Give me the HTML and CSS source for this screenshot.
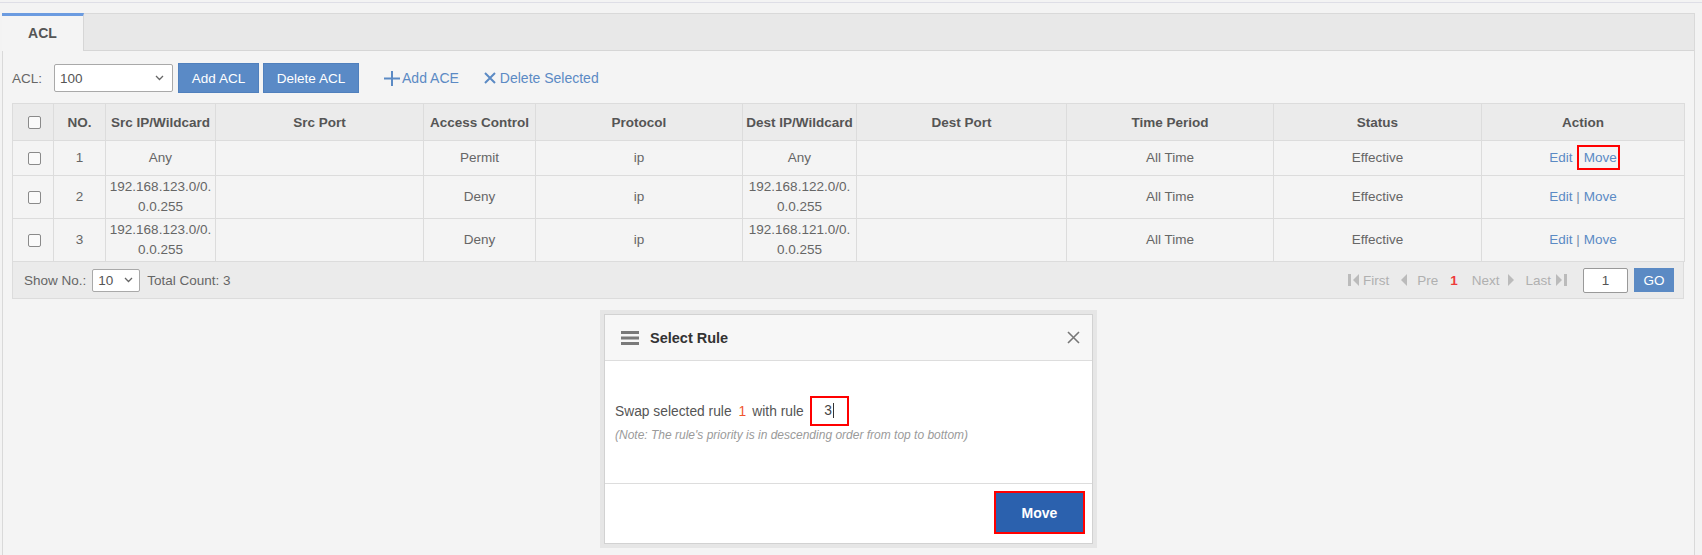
FILE: index.html
```html
<!DOCTYPE html>
<html lang="en">
<head>
  <meta charset="UTF-8" />
  <title>ACL</title>
  <link rel="stylesheet" href="styles.css">
</head>
<body>
  <div class="topline"></div>
  <div class="panel">
    <div class="tabs">
      <div class="tab active">ACL</div>
    </div>
    <div class="panel-body">
      <div class="toolbar">
        <span class="lbl">ACL:</span>
        <div class="select select-acl">
          <span>100</span>
          <svg width="9" height="6" viewBox="0 0 9 6"><path d="M1 1l3.5 3.5L8 1" fill="none" stroke="#666" stroke-width="1.3"/></svg>
        </div>
        <button class="btn btn-add">Add ACL</button>
        <button class="btn btn-del">Delete ACL</button>
        <a class="tool-link"><svg width="16" height="15" viewBox="0 0 16 15"><path d="M0 7.5H16M8 0V15" stroke="#5b8ac4" stroke-width="2"/></svg>Add ACE</a>
        <a class="tool-link tool-del"><svg width="12" height="12" viewBox="0 0 12 12"><path d="M1 1L11 11M11 1L1 11" stroke="#5b8ac4" stroke-width="2"/></svg>Delete Selected</a>
      </div>

      <table class="grid">
        <colgroup>
          <col style="width:41px"><col style="width:52px"><col style="width:110px"><col style="width:208px">
          <col style="width:112px"><col style="width:207px"><col style="width:114px"><col style="width:210px">
          <col style="width:207px"><col style="width:208px"><col style="width:203px">
        </colgroup>
        <thead>
          <tr>
            <th><span class="chk"></span></th>
            <th>NO.</th>
            <th>Src IP/Wildcard</th>
            <th>Src Port</th>
            <th>Access Control</th>
            <th>Protocol</th>
            <th>Dest IP/Wildcard</th>
            <th>Dest Port</th>
            <th>Time Period</th>
            <th>Status</th>
            <th>Action</th>
          </tr>
        </thead>
        <tbody>
          <tr class="one">
            <td><span class="chk"></span></td>
            <td>1</td>
            <td>Any</td>
            <td></td>
            <td>Permit</td>
            <td>ip</td>
            <td>Any</td>
            <td></td>
            <td>All Time</td>
            <td>Effective</td>
            <td><a class="act">Edit</a> <span class="sep">|</span> <a class="act mark">Move</a></td>
          </tr>
          <tr>
            <td><span class="chk"></span></td>
            <td>2</td>
            <td>192.168.123.0/0.0.0.255</td>
            <td></td>
            <td>Deny</td>
            <td>ip</td>
            <td>192.168.122.0/0.0.0.255</td>
            <td></td>
            <td>All Time</td>
            <td>Effective</td>
            <td><a class="act">Edit</a> <span class="sep">|</span> <a class="act">Move</a></td>
          </tr>
          <tr>
            <td><span class="chk"></span></td>
            <td>3</td>
            <td>192.168.123.0/0.0.0.255</td>
            <td></td>
            <td>Deny</td>
            <td>ip</td>
            <td>192.168.121.0/0.0.0.255</td>
            <td></td>
            <td>All Time</td>
            <td>Effective</td>
            <td><a class="act">Edit</a> <span class="sep">|</span> <a class="act">Move</a></td>
          </tr>
        </tbody>
      </table>

      <div class="pager">
        <span>Show No.:</span>
        <div class="select select-size">
          <span>10</span>
          <svg width="9" height="6" viewBox="0 0 9 6"><path d="M1 1l3.5 3.5L8 1" fill="none" stroke="#666" stroke-width="1.3"/></svg>
        </div>
        <span>Total Count: 3</span>

        <div class="pages">
          <span class="pg pg-first"><svg width="11" height="12" viewBox="0 0 11 12"><rect x="0" y="0" width="3" height="12" fill="#bbb"/><path d="M11 0V12L5 6Z" fill="#bbb"/></svg>First</span>
          <span class="pg pg-pre"><svg width="6" height="12" viewBox="0 0 6 12"><path d="M6 0V12L0 6Z" fill="#bbb"/></svg>Pre</span>
          <span class="cur">1</span>
          <span class="pg pg-next">Next<svg width="6" height="12" viewBox="0 0 6 12"><path d="M0 0V12L6 6Z" fill="#bbb"/></svg></span>
          <span class="pg pg-last">Last<svg width="11" height="12" viewBox="0 0 11 12"><path d="M0 0V12L6 6Z" fill="#bbb"/><rect x="8" y="0" width="3" height="12" fill="#bbb"/></svg></span>
          <div class="page-input">1</div>
          <button class="go">GO</button>
        </div>
      </div>

      <div class="dialog">
        <div class="dlg">
          <div class="dlg-head">
            <svg width="18" height="14" viewBox="0 0 18 14"><rect y="0" width="18" height="3" fill="#7a7a7a"/><rect y="5.5" width="18" height="3" fill="#7a7a7a"/><rect y="11" width="18" height="3" fill="#7a7a7a"/></svg>
            <span class="dlg-title">Select Rule</span>
            <svg class="close" width="13" height="13" viewBox="0 0 13 13"><path d="M1 1L12 12M12 1L1 12" stroke="#777" stroke-width="1.6"/></svg>
          </div>
          <div class="dlg-body">
            <div class="swap">
              <span>Swap selected rule</span>
              <span class="rule-no">1</span>
              <span>with rule</span>
              <div class="rule-input"><span class="caret">3</span></div>
            </div>
            <div class="note">(Note: The rule's priority is in descending order from top to bottom)</div>
          </div>
          <div class="dlg-foot">
            <button class="btn-move">Move</button>
          </div>
        </div>
      </div>
    </div>
  </div>
</body>
</html>
```

FILE: styles.css
```css
html, body {
  overflow: hidden;
}

body {
  margin: 0;
  background: #f3f3f3;
  font-family: "Liberation Sans", Arial, sans-serif;
  font-size: 13.5px;
  color: #666;
}

.topline {
  height: 2px;
  border-bottom: 1px solid #dedee6;
}

.panel {
  margin: 10px 7px 0 2px;
  border: 1px solid #d9d9d9;
  background: #f4f4f4;
  height: 600px;
}

/* tab strip */
.tabs {
  display: flex;
  height: 36px;
  background: #e8e8e8;
  border-bottom: 1px solid #d6d6d6;
}

.tab {
  box-sizing: border-box;
  width: 82px;
  height: 38px;
  margin: -1px 0 0 -1px;
  border-top: 3px solid #6b9be0;
  border-right: 1px solid #d6d6d6;
  background: #f4f4f4;
  font-size: 14px;
  font-weight: bold;
  color: #555;
  text-align: center;
  line-height: 34px;
}

.panel-body {
  padding: 12px 9px 0;
}

/* toolbar */
.toolbar {
  display: flex;
  align-items: center;
  height: 30px;
}

.lbl {
  margin-right: 12px;
}

.select {
  box-sizing: border-box;
  display: flex;
  align-items: center;
  justify-content: space-between;
  background: #fff;
  border: 1px solid #a9a9a9;
  border-radius: 2px;
  color: #555;
}

.select-acl {
  width: 119px;
  height: 28px;
  padding: 0 8px 0 5px;
}

.btn {
  box-sizing: border-box;
  height: 30px;
  padding: 0;
  background: #5a8ac6;
  border: 1px solid #5080bd;
  color: #fff;
  font: inherit;
}

.btn-add {
  width: 81px;
  margin-left: 5px;
}

.btn-del {
  width: 96px;
  margin-left: 4px;
}

.tool-link {
  display: flex;
  align-items: center;
  margin-left: 25px;
  font-size: 14px;
  color: #5b8ac4;
}

.tool-link svg {
  margin-right: 2px;
}

.tool-del svg {
  margin-right: 4px;
}

/* table */
.grid {
  margin-top: 10px;
  width: 1672px;
  table-layout: fixed;
  border-collapse: collapse;
  border: 1px solid #dcdcdc;
}

.grid th,
.grid td {
  border: 1px solid #dcdcdc;
  text-align: center;
}

.grid th {
  height: 36px;
  padding: 0 2px;
  background: #ebebeb;
  font-weight: bold;
  color: #555;
}

.grid td {
  padding: 1px 2px;
  line-height: 20px;
  word-break: break-all;
}

.grid tr.one td {
  height: 32px;
}

.chk {
  display: inline-block;
  vertical-align: middle;
  box-sizing: border-box;
  width: 13px;
  height: 13px;
  margin-left: 2px;
  border: 1px solid #8a8a8a;
  border-radius: 2px;
  background: #fafafa;
}

.act {
  color: #5b8ac4;
}

.sep {
  color: #7a8ca8;
}

.mark {
  position: relative;
  display: inline-block;
}

.mark::after {
  content: "";
  position: absolute;
  left: -7px;
  right: -3px;
  top: -3px;
  bottom: -2px;
  border: 2px solid #f00;
}

/* pager */
.pager {
  box-sizing: border-box;
  width: 1672px;
  height: 37px;
  display: flex;
  align-items: center;
  padding: 0 9px 0 11px;
  background: #ebebeb;
  border: 1px solid #dcdcdc;
  border-top: 0;
}

.select-size {
  width: 48px;
  height: 23px;
  margin: 0 7px 0 6px;
  padding: 0 6px 0 5px;
}

.pages {
  margin-left: auto;
  display: flex;
  align-items: center;
  color: #b0b0b0;
}

.pg {
  display: flex;
  align-items: center;
}

.pg-first svg { margin-right: 4px; }
.pg-pre { margin-left: 12px; }
.pg-pre svg { margin-right: 10px; }

.cur {
  margin-left: 12px;
  color: #ee3b3b;
  font-weight: bold;
}

.pg-next { margin-left: 14px; }
.pg-next svg { margin-left: 9px; }
.pg-last { margin-left: 11px; }
.pg-last svg { margin-left: 5px; }

.page-input {
  box-sizing: border-box;
  width: 45px;
  height: 25px;
  margin-left: 16px;
  border: 1px solid #999;
  border-radius: 2px;
  background: #fff;
  color: #555;
  text-align: center;
  line-height: 23px;
}

.go {
  width: 40px;
  height: 24px;
  margin-left: 6px;
  border: none;
  background: #5b8ac4;
  color: #fff;
  font: inherit;
}

/* dialog */
.dialog {
  box-sizing: border-box;
  width: 497px;
  margin: 11px auto 0;
  padding: 4px;
  background: #e6e6e6;
}

.dlg {
  border: 1px solid #d2d2d2;
  background: #fff;
}

.dlg-head {
  height: 45px;
  display: flex;
  align-items: center;
  padding: 0 12px 0 16px;
  background: #f7f7f7;
  border-bottom: 1px solid #dddddd;
}

.dlg-title {
  margin-left: 11px;
  font-size: 14.5px;
  font-weight: bold;
  color: #333;
}

.close {
  margin-left: auto;
}

.dlg-body {
  box-sizing: border-box;
  height: 122px;
  padding: 35px 10px 0;
}

.swap {
  display: flex;
  align-items: center;
  height: 30px;
  font-size: 13.8px;
  color: #555;
}

.rule-no {
  margin: 0 6px 0 7px;
  color: #f0552d;
}

.rule-input {
  box-sizing: border-box;
  width: 39px;
  height: 30px;
  margin-left: 6px;
  border: 2px solid #f00;
  text-align: center;
  line-height: 26px;
  color: #444;
}

.caret {
  padding-right: 1px;
  border-right: 1px solid #333;
}

.note {
  margin-top: 1px;
  font-size: 12px;
  font-style: italic;
  line-height: 16px;
  color: #9a9a9a;
}

.dlg-foot {
  height: 60px;
  display: flex;
  justify-content: flex-end;
  padding: 7px 7px 0 0;
  box-sizing: border-box;
  border-top: 1px solid #dddddd;
}

.btn-move {
  box-sizing: border-box;
  width: 91px;
  height: 43px;
  background: #2b61ae;
  border: 2px solid #f00;
  color: #fff;
  font-family: inherit;
  font-size: 14px;
  font-weight: bold;
}
```
